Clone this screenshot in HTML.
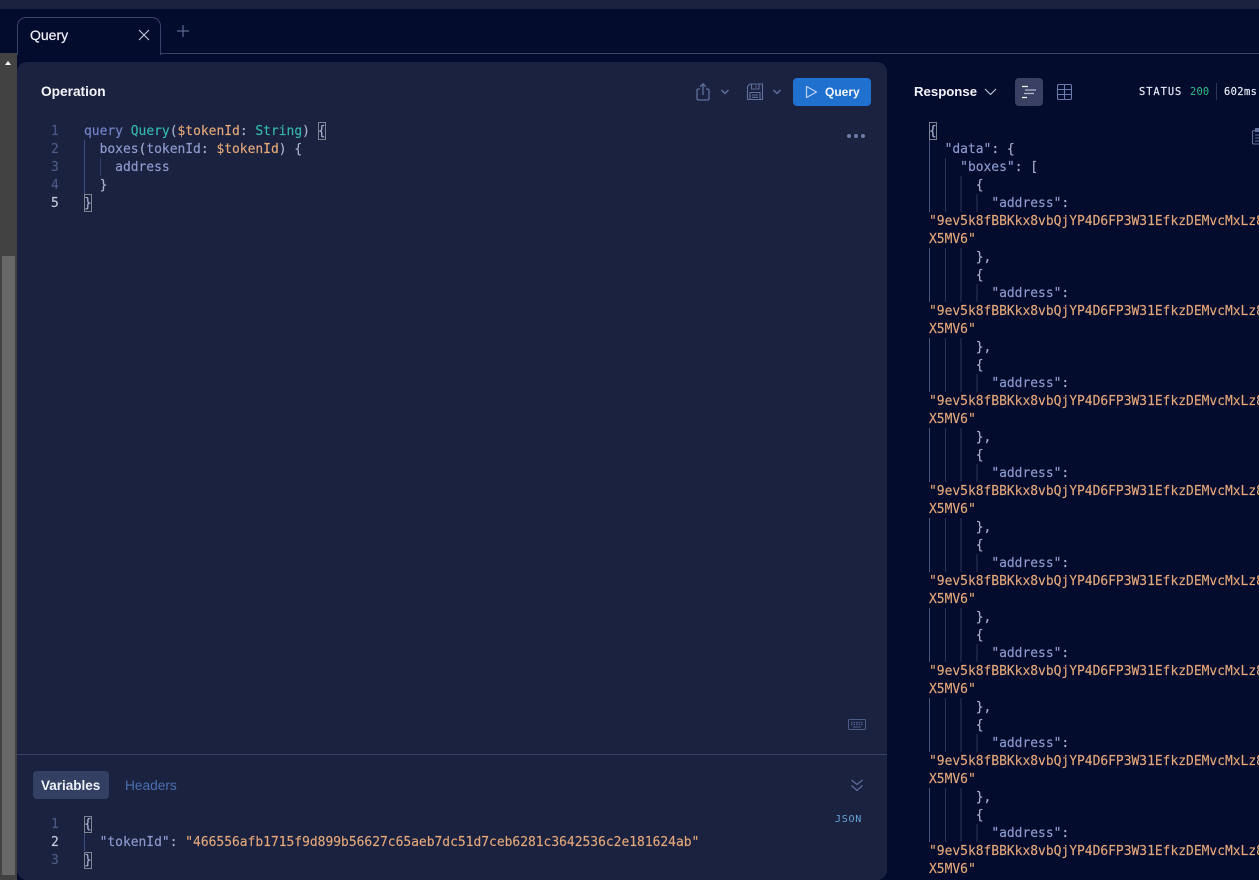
<!DOCTYPE html>
<html><head><meta charset="utf-8"><style>
html,body{margin:0;padding:0;width:1259px;height:880px;overflow:hidden;background:#040c2e}
*{box-sizing:border-box}
.a{position:absolute}
.s{font-family:"Liberation Sans",sans-serif}
.m{font-family:"DejaVu Sans Mono",monospace;font-size:12.95px;line-height:18px;height:18px;white-space:pre;position:absolute;margin-top:1px;-webkit-text-stroke:.15px}
.r .m{left:929px}
.k{color:#8f9bcf}.p{color:#a9b1cc}.o{color:#e3a77a}.t{color:#35b8ad}.q{color:#7384c8}.n{color:#4c5a85}.w{color:#c4c9d8}
</style></head><body>
<div class="a" style="left:0;top:0;width:1259px;height:9px;background:#1b2240"></div>

<!-- tab bar -->
<div class="a" style="left:0;top:53px;width:1259px;height:1px;background:#39426a"></div>
<div class="a" style="left:17px;top:17px;width:144px;height:38px;background:#040c2e;border:1px solid #39426a;border-bottom:none;border-radius:9px 9px 0 0"></div>
<div class="a s" style="left:30px;top:26px;font-size:14px;line-height:18px;color:#eef1f8;-webkit-text-stroke:.2px">Query</div>
<svg class="a" style="left:138px;top:29px" width="12" height="12" viewBox="0 0 12 12"><path d="M1 1L11 11M11 1L1 11" stroke="#c4cadb" stroke-width="1.1" fill="none"/></svg>
<svg class="a" style="left:176px;top:24px" width="14" height="14" viewBox="0 0 14 14"><path d="M7 1V13M1 7H13" stroke="#5a6792" stroke-width="1.2" fill="none"/></svg>

<!-- left scrollbar -->
<div class="a" style="left:0;top:53px;width:17px;height:827px;background:#424242"></div>
<div class="a" style="left:2px;top:256px;width:13px;height:619px;background:#686868"></div>
<div class="a" style="left:5px;top:61px;width:0;height:0;border-left:3.5px solid transparent;border-right:3.5px solid transparent;border-bottom:4px solid #fff"></div>

<!-- panel -->
<div class="a" style="left:17px;top:62px;width:870px;height:818px;background:#1b2240;border-radius:10px 10px 10px 10px"></div>
<div class="a s" style="left:41px;top:83px;font-size:13.7px;line-height:18px;font-weight:bold;color:#f3f5fa">Operation</div>

<!-- toolbar icons -->
<svg class="a" style="left:695px;top:82px" width="17" height="20" viewBox="0 0 17 20" fill="none" stroke="#5f6f9c" stroke-width="1.3"><path d="M5 7H3.5Q2 7 2 8.5V16.5Q2 18 3.5 18H12.5Q14 18 14 16.5V8.5Q14 7 12.5 7H11"/><path d="M8 13V2M5 4.8L8 1.8L11 4.8"/></svg>
<svg class="a" style="left:720px;top:88px" width="10" height="8" viewBox="0 0 10 8" fill="none" stroke="#5f6f9c" stroke-width="1.5"><path d="M1.5 2L5 5.5L8.5 2"/></svg>
<svg class="a" style="left:746px;top:83px" width="18" height="18" viewBox="0 0 18 18" fill="none" stroke="#5f6f9c" stroke-width="1.1"><path d="M1.5 16.5V3.5L4 1H16.5V16.5Z"/><path d="M5.5 1V6H13V1M10 2.5V4.5M4 16.5V9.5H14V16.5M6 12H12M6 14.3H12"/></svg>
<svg class="a" style="left:772px;top:88px" width="10" height="8" viewBox="0 0 10 8" fill="none" stroke="#5f6f9c" stroke-width="1.5"><path d="M1.5 2L5 5.5L8.5 2"/></svg>
<div class="a" style="left:793px;top:78px;width:78px;height:28px;background:#2070cf;border-radius:4px"></div>
<svg class="a" style="left:805px;top:85px" width="13" height="14" viewBox="0 0 13 14" fill="none" stroke="#bcd4f2" stroke-width="1.2"><path d="M1.5 1.5L11.5 7L1.5 12.5Z" stroke-linejoin="round"/></svg>
<div class="a s" style="left:825px;top:83px;font-size:12px;line-height:18px;font-weight:bold;color:#f3f6fc">Query</div>
<svg class="a" style="left:846px;top:133px" width="20" height="6" viewBox="0 0 20 6" fill="#6d7ba6"><circle cx="3" cy="3" r="2"/><circle cx="10" cy="3" r="2"/><circle cx="17" cy="3" r="2"/></svg>

<!-- operation editor -->
<div class="m n" style="left:51px;top:122px">1</div>
<div class="m n" style="left:51px;top:140px">2</div>
<div class="m n" style="left:51px;top:158px">3</div>
<div class="m n" style="left:51px;top:176px">4</div>
<div class="m w" style="left:51px;top:194px">5</div>
<div class="a" style="left:84px;top:140px;width:1px;height:54px;background:#3f4d80"></div>
<div class="a" style="left:100px;top:158px;width:1px;height:18px;background:#343e66"></div>
<div class="a" style="left:318px;top:122px;width:8px;height:18px;border:1px solid #7d8590"></div>
<div class="a" style="left:84px;top:194px;width:8px;height:18px;border:1px solid #7d8590"></div>
<div class="m" style="left:84px;top:122px"><span class="q">query</span> <span class="t">Query</span><span class="p">(</span><span class="o">$tokenId</span><span class="p">: </span><span class="t">String</span><span class="p">) {</span></div>
<div class="m" style="left:84px;top:140px">  <span class="k">boxes</span><span class="p">(</span><span class="k">tokenId</span><span class="p">: </span><span class="o">$tokenId</span><span class="p">) {</span></div>
<div class="m" style="left:84px;top:158px">    <span class="k">address</span></div>
<div class="m p" style="left:84px;top:176px">  }</div>
<div class="m p" style="left:84px;top:194px">}</div>

<svg class="a" style="left:848px;top:719px" width="18" height="11" viewBox="0 0 18 11" fill="none" stroke="#4d5c8a"><rect x="0.5" y="0.5" width="17" height="10" rx="1"/><path d="M3 3.5H15M3 5.5H15" stroke-dasharray="1.5 1" stroke-width="1.2"/><path d="M5 8H13"/></svg>

<!-- divider and variables -->
<div class="a" style="left:17px;top:754px;width:870px;height:1px;background:#373f63"></div>
<div class="a" style="left:33px;top:771px;width:76px;height:28px;background:#333f63;border-radius:4px"></div>
<div class="a s" style="left:41px;top:777px;font-size:13.5px;line-height:18px;font-weight:bold;color:#eef1f8">Variables</div>
<div class="a s" style="left:125px;top:777px;font-size:13.7px;line-height:18px;color:#4a6fb0">Headers</div>
<svg class="a" style="left:850px;top:778px" width="14" height="14" viewBox="0 0 14 14" fill="none" stroke="#5f6f9c" stroke-width="1.2"><path d="M1.5 2L7 6.5L12.5 2M1.5 7.5L7 12.5L12.5 7.5"/></svg>
<div class="a" style="left:835px;top:813px;font-family:'DejaVu Sans Mono',monospace;font-size:10px;line-height:14px;letter-spacing:.75px;color:#62a6d8">JSON</div>

<div class="m n" style="left:51px;top:815px">1</div>
<div class="m w" style="left:51px;top:833px">2</div>
<div class="m n" style="left:51px;top:851px">3</div>
<div class="a" style="left:84px;top:833px;width:1px;height:18px;background:#3f4d80"></div>
<div class="a" style="left:84px;top:816px;width:8px;height:17px;border:1px solid #7d8590"></div>
<div class="a" style="left:84px;top:852px;width:8px;height:17px;border:1px solid #7d8590"></div>
<div class="m p" style="left:84px;top:815px">{</div>
<div class="m" style="left:84px;top:833px">  <span class="k">"tokenId"</span><span class="p">: </span><span class="o">"466556afb1715f9d899b56627c65aeb7dc51d7ceb6281c3642536c2e181624ab"</span></div>
<div class="m p" style="left:84px;top:851px">}</div>

<!-- response header -->
<div class="a s" style="left:914px;top:83px;font-size:13.2px;line-height:18px;font-weight:bold;color:#f0f3fa">Response</div>
<svg class="a" style="left:984px;top:87px" width="13" height="10" viewBox="0 0 13 10" fill="none" stroke="#c4cadb" stroke-width="1.1"><path d="M1 2L6.5 7.5L12 2"/></svg>
<div class="a" style="left:1015px;top:78px;width:28px;height:28px;background:#3a4063;border-radius:4px"></div>
<svg class="a" style="left:1021px;top:85px" width="16" height="14" viewBox="0 0 16 14" fill="none" stroke-width="1.2"><path d="M1 1.5H7M1 12.5H6" stroke="#f0f2f8"/><path d="M4 5H15M3 8.5H13" stroke="#b5bac9"/></svg>
<svg class="a" style="left:1057px;top:84px" width="15" height="16" viewBox="0 0 15 16" fill="none" stroke="#6a7cab" stroke-width="1.1"><rect x="0.5" y="0.5" width="14" height="15" rx="1.5"/><path d="M0.5 5.5H14.5M0.5 10.5H14.5M7.5 0.5V15.5"/></svg>
<div class="a" style="left:1139px;top:85px;font-family:'DejaVu Sans Mono',monospace;font-size:10.4px;line-height:14px;letter-spacing:.95px;color:#e4e8f3;-webkit-text-stroke:.2px">STATUS</div>
<div class="a" style="left:1190px;top:85px;font-family:'DejaVu Sans Mono',monospace;font-size:10.4px;line-height:14px;letter-spacing:.2px;color:#2ebd85">200</div>
<div class="a" style="left:1216px;top:83px;width:1px;height:17px;background:#2d3658"></div>
<div class="a" style="left:1224px;top:85px;font-family:'DejaVu Sans Mono',monospace;font-size:10.4px;line-height:14px;letter-spacing:.4px;color:#e4e8f3;-webkit-text-stroke:.2px">602ms</div>
<svg class="a" style="left:1252px;top:128px" width="12" height="17" viewBox="0 0 12 17" fill="none" stroke="#5f6f9c" stroke-width="1.1"><rect x="0.5" y="2.5" width="13" height="13.5" rx="1.5"/><rect x="3.5" y="0.5" width="6" height="3" fill="#5f6f9c"/><path d="M3 7H11M3 10H11M3 13H11"/></svg>

<!-- response guides -->
<svg class="a" style="left:0;top:0" width="1259" height="880" fill="none" stroke-width="1">
<path stroke="#47557f" d="M929.5 140V212M929.5 248V302M929.5 338V392M929.5 428V482M929.5 518V572M929.5 608V662M929.5 698V752M929.5 788V842"/>
<path stroke="#2c3558" d="M945.5 158V212M945.5 248V302M945.5 338V392M945.5 428V482M945.5 518V572M945.5 608V662M945.5 698V752M945.5 788V842M961 176V212M961 248V302M961 338V392M961 428V482M961 518V572M961 608V662M961 698V752M961 788V842M977 194V212M977 284V302M977 374V392M977 464V482M977 554V572M977 644V662M977 734V752M977 824V842"/>
</svg>
<div class="a" style="left:929px;top:122px;width:8px;height:18px;border:1px solid #7d8590"></div>

<!-- response text -->
<div class="r">
<div class="m p" style="top:122px">{</div>
<div class="m" style="top:140px">  <span class="k">"data"</span><span class="p">: {</span></div>
<div class="m" style="top:158px">    <span class="k">"boxes"</span><span class="p">: [</span></div>
<div class="m p" style="top:176px">      {</div>
<div class="m" style="top:194px">        <span class="k">"address"</span><span class="p">:</span></div>
<div class="m o" style="top:212px">"9ev5k8fBBKkx8vbQjYP4D6FP3W31EfkzDEMvcMxLz8</div>
<div class="m o" style="top:230px">X5MV6"</div>
<div class="m p" style="top:248px">      },</div>
<div class="m p" style="top:266px">      {</div>
<div class="m" style="top:284px">        <span class="k">"address"</span><span class="p">:</span></div>
<div class="m o" style="top:302px">"9ev5k8fBBKkx8vbQjYP4D6FP3W31EfkzDEMvcMxLz8</div>
<div class="m o" style="top:320px">X5MV6"</div>
<div class="m p" style="top:338px">      },</div>
<div class="m p" style="top:356px">      {</div>
<div class="m" style="top:374px">        <span class="k">"address"</span><span class="p">:</span></div>
<div class="m o" style="top:392px">"9ev5k8fBBKkx8vbQjYP4D6FP3W31EfkzDEMvcMxLz8</div>
<div class="m o" style="top:410px">X5MV6"</div>
<div class="m p" style="top:428px">      },</div>
<div class="m p" style="top:446px">      {</div>
<div class="m" style="top:464px">        <span class="k">"address"</span><span class="p">:</span></div>
<div class="m o" style="top:482px">"9ev5k8fBBKkx8vbQjYP4D6FP3W31EfkzDEMvcMxLz8</div>
<div class="m o" style="top:500px">X5MV6"</div>
<div class="m p" style="top:518px">      },</div>
<div class="m p" style="top:536px">      {</div>
<div class="m" style="top:554px">        <span class="k">"address"</span><span class="p">:</span></div>
<div class="m o" style="top:572px">"9ev5k8fBBKkx8vbQjYP4D6FP3W31EfkzDEMvcMxLz8</div>
<div class="m o" style="top:590px">X5MV6"</div>
<div class="m p" style="top:608px">      },</div>
<div class="m p" style="top:626px">      {</div>
<div class="m" style="top:644px">        <span class="k">"address"</span><span class="p">:</span></div>
<div class="m o" style="top:662px">"9ev5k8fBBKkx8vbQjYP4D6FP3W31EfkzDEMvcMxLz8</div>
<div class="m o" style="top:680px">X5MV6"</div>
<div class="m p" style="top:698px">      },</div>
<div class="m p" style="top:716px">      {</div>
<div class="m" style="top:734px">        <span class="k">"address"</span><span class="p">:</span></div>
<div class="m o" style="top:752px">"9ev5k8fBBKkx8vbQjYP4D6FP3W31EfkzDEMvcMxLz8</div>
<div class="m o" style="top:770px">X5MV6"</div>
<div class="m p" style="top:788px">      },</div>
<div class="m p" style="top:806px">      {</div>
<div class="m" style="top:824px">        <span class="k">"address"</span><span class="p">:</span></div>
<div class="m o" style="top:842px">"9ev5k8fBBKkx8vbQjYP4D6FP3W31EfkzDEMvcMxLz8</div>
<div class="m o" style="top:860px">X5MV6"</div>
</div>
</body></html>
